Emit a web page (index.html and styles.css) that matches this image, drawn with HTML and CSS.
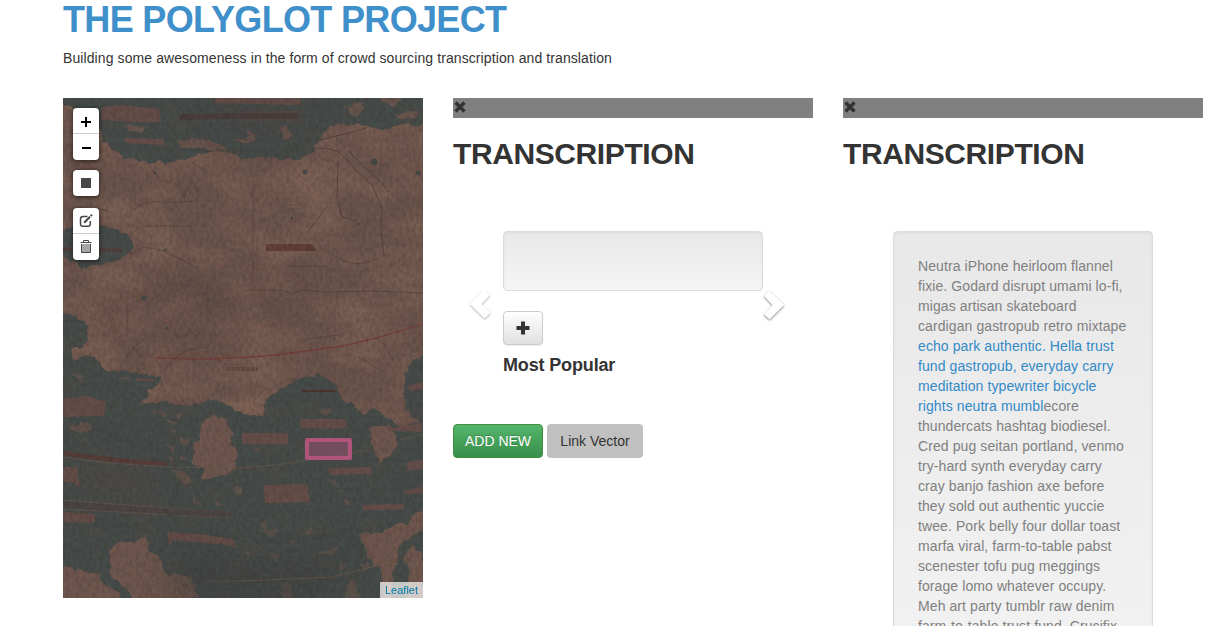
FILE: index.html
```html
<!DOCTYPE html>
<html lang="en">
<head>
<meta charset="utf-8">
<title>The Polyglot Project</title>
<link rel="stylesheet" href="styles.css">
</head>
<body>
<header class="page-header">
  <h1 class="site-title"><a href="#">THE POLYGLOT PROJECT</a></h1>
  <p class="tagline">Building some awesomeness in the form of crowd sourcing transcription and translation</p>
</header>
<main class="columns">
  <section class="map">
    <svg class="map-image" viewBox="0 0 360 500" width="360" height="500">
      <defs>
        <filter id="ragged" x="0" y="0" width="360" height="500" filterUnits="userSpaceOnUse" color-interpolation-filters="sRGB">
          <feTurbulence type="fractalNoise" baseFrequency=".12" numOctaves="3" seed="7"/>
          <feDisplacementMap in="SourceGraphic" scale="7" xChannelSelector="R" yChannelSelector="G"/>
          <feGaussianBlur stdDeviation=".7"/>
        </filter>
        <filter id="grain" x="0" y="0" width="360" height="500" filterUnits="userSpaceOnUse" color-interpolation-filters="sRGB">
          <feTurbulence type="fractalNoise" baseFrequency=".3 .2" numOctaves="4" seed="3"/>
          <feColorMatrix values="0 0 0 0 .18  0 0 0 0 .15  0 0 0 0 .13  1.4 0 0 0 -.5"/>
        </filter>
        <filter id="mottle" x="0" y="0" width="360" height="500" filterUnits="userSpaceOnUse" color-interpolation-filters="sRGB">
          <feTurbulence type="fractalNoise" baseFrequency=".018 .03" numOctaves="4" seed="12"/>
          <feColorMatrix values="0 0 0 0 .56  0 0 0 0 .43  0 0 0 0 .37  2.4 0 0 0 -.85"/>
        </filter>
        <filter id="stain" x="0" y="0" width="360" height="500" filterUnits="userSpaceOnUse" color-interpolation-filters="sRGB">
          <feTurbulence type="fractalNoise" baseFrequency=".03 .05" numOctaves="4" seed="31"/>
          <feColorMatrix values="0 0 0 0 .4  0 0 0 0 .31  0 0 0 0 .27  2.6 0 0 0 -1.15"/>
        </filter>
        <filter id="soft" x="0" y="0" width="360" height="500" filterUnits="userSpaceOnUse"><feGaussianBlur stdDeviation=".6"/></filter>
        <filter id="shade" x="0" y="0" width="360" height="500" filterUnits="userSpaceOnUse"><feGaussianBlur stdDeviation="14"/></filter>
      </defs>
      <rect width="360" height="500" fill="#6b544c"/>
      <rect width="360" height="500" filter="url(#mottle)" opacity=".5"/>
      <g filter="url(#ragged)" fill="#464c4a">
        <path d="M0-9H370V28L345 26 320 31 300 28 280 26 265 30 256 43 249 54 235 62 205 59 180 61 168 53 150 52 138 56 116 63 88 65 62 60 50 51 40 43 35 24 20 20 12 10 0 6z"/>
        <path d="M-5 133L25 128 53 130 70 142 72 150 61 160 42 165 20 170-5 153z"/>
        <path d="M-5 213L12 217 23 227 26 241 18 250 8 250 10 263 22 257 35 261 42 273 65 274 98 278 93 288 83 292 86 300 78 306 103 303 123 308 146 303 163 306 181 316 200 319 202 303 213 294 237 280 257 277 270 284 280 301 291 307 301 317 310 310 324 319 338 331 356 323 345 314 341 300 342 275 348 263 367 254V510H-9z"/>
      </g>
      <rect width="360" height="500" filter="url(#stain)" opacity=".15"/>
      <g filter="url(#ragged)" fill="#6f574e">
        <path opacity=".85" d="M282 8L298 5 302 11 288 19zM318 0H337L332 8 320 5zM331 17L356 11 350 20 337 21zM216 31L225 28 229 39 221 42zM170 40L182 42 188 37 184 32 193 36 193 43 178 46zM65 27L82 29 79 34 66 33zM113 42L145 41 165 51 118 50zM0 9L12 14 8 24 0 20zM18 28L29 35 25 45 15 40z"/>
        <path d="M137 326L149 317 163 321 170 338 167 347 176 354 171 366 174 373 157 378 138 381 143 369 130 367 130 347 137 341z"/>
        <path d="M0 468L19 474 37 476 40 486 55 493 58 505-8 505zM46 452L59 443 72 445 82 436 86 453 97 459 101 475 128 480 135 499 74 505 60 488 47 477z"/>
        <path d="M306 330L327 327 335 346 328 357 318 365 311 351zM297 436L319 434 332 426 345 426 352 414 370 408V428L350 436 336 450 333 470 328 475 330 503 321 500 319 475 307 461 302 451zM349 446L360 458V504H342L346 474 341 459z"/>
        <path opacity=".65" d="M4 329L26 323 29 332 13 336zM8 276L20 277 17 282zM50 279L69 280 67 283zM85 311L95 314 93 317zM96 312L104 316 101 320zM101 321L113 323 110 329zM111 315L121 317 116 322zM107 331L114 333 110 337zM116 339L127 342 121 347zM103 346L112 349 111 355zM117 357L124 360 119 363zM103 359L112 361 109 366zM107 370L119 373 129 383 122 387zM130 397L138 407 131 404zM152 400L159 407 152 407zM172 385L181 395 173 397zM257 312L263 309 268 312 264 318 258 316zM190 348L198 352 191 354z"/>
        <path opacity=".55" d="M193 431L214 432 210 440 203 436zM202 424L209 434 197 426zM240 434L252 429 244 439zM206 454L218 458 212 466zM226 441L233 442 231 447zM253 456L276 448 270 458zM275 465L284 466 280 473zM296 466L306 466 300 474zM218 484L229 485 230 503 220 500zM284 485L291 482 297 502 279 505zM270 381L279 389 266 384zM281 402L289 402 284 409zM275 393L279 391 277 396zM182 450L193 453 184 455z"/>
      </g>
      <g filter="url(#soft)" fill="#6c5048" opacity=".85">
        <path d="M39 9L60 7 96 11 98 24 72 24 38 22zM62 40L100 41 101 47 62 45zM154 0H238V7L150 5z"/>
        <path d="M0 301L25 298 43 304 41 318 0 319zM73 280L91 281 90 284 74 283zM0 369H14L17 389 8 384 0 384zM0 414L32 416 31 425 0 424zM105 434L138 436 170 441 175 450 164 447 110 442 105 449z"/>
        <path d="M237 321L283 321 284 328 277 331 238 330zM179 335H225V346H179zM265 370L308 369 309 376 267 377zM201 387L244 386 247 404 202 405zM299 407L341 406 340 412 300 412zM345 288L362 283V291L347 293zM344 364L365 361V371L344 372zM341 393L366 387V395L343 396zM324 331L359 325V334L326 333z"/>
      </g>
      <g filter="url(#shade)">
        <path d="M120 450Q220 480 290 450L250 500H100z" fill="#3d3e3b" opacity=".5"/>
        <path d="M20 340Q40 370 100 375L80 410 20 395z" fill="#514844" opacity=".5"/>
        <path d="M150 10H235V30H150z" fill="#4c433f" opacity=".5"/>
        <path d="M60 215L130 210 160 235 80 240zM110 180Q170 190 230 190L220 210 100 200z" fill="#4d403b" opacity=".4"/>
      </g>
      <g filter="url(#soft)" fill="none">
        <path d="M117 19L180 18 236 18" stroke="#4d3437" stroke-width="6" opacity=".55"/>
        <path d="M180 14H240M180 22H240" stroke="#69483f" opacity=".7"/>
        <path d="M203 146H249L254 153H203z" fill="#57362f" opacity=".75"/>
        <path d="M206 147V153M212 147V153M220 147V153M230 147V153M238 147V153" stroke="#725148" opacity=".6"/>
        <path d="M58 152H35M0 151H9" stroke="#58373b" stroke-width="3" stroke-dasharray="4 1"/>
        <path d="M239 293H273" stroke="#4d302f" stroke-width="2"/>
        <path d="M163 271H195" stroke="#583e36" stroke-width="4" stroke-dasharray="4 1" opacity=".6"/>
        <path d="M0 355Q50 363 104 366" stroke="#583c38" stroke-width="4"/>
        <path d="M0 359Q45 366 105 369M0 402L168 415M0 411L170 420" stroke="#6e5850" opacity=".7"/>
        <path d="M0 407L168 417" stroke="#4e4040" stroke-width="6" opacity=".6"/>
        <path d="M93 260Q178 263 235 254L280 248 313 240 360 226" stroke="#753f39" stroke-width="1.3"/>
        <path d="M256 42Q275 38 303 30M140 53H182M255 50Q276 48 289 68L309 87 319 110 318 132 321 157M275 62L274 102 279 119 294 123M285 53L318 84 326 94M265 107L244 135" stroke="#493b37" opacity=".65"/>
        <path d="M245 241L275 237M180 192L218 192 229 196 240 192 265 194 310 193 360 195M295 258L319 274M321 246L330 262M79 128H127M225 168H264" stroke="#483935" opacity=".5"/>
        <path d="M105 369L180 370 220 366 308 352M337 342L360 336M180 483L270 479 340 461M140 483H180" stroke="#705a4c" opacity=".65"/>
        <path d="M323 330L345 326 360 323M35 427L34 480" stroke="#5a4c46" opacity=".6"/>
        <path d="M90 72Q102 91 111 80M115 83L121 100 129 83 137 98M128 63L145 75M20 115Q30 108 45 113M68 156L80 149 98 152 117 161 135 170M100 273L108 263 122 253 144 249M120 225L134 239 140 230M60 265L70 250 85 238M70 112Q85 100 100 105L130 103M260 150Q290 175 315 160" stroke="#4e3f39" opacity=".55"/>
        <path d="M190 90V190M64 205V235" stroke="#4b3c37" stroke-width="3" opacity=".2"/>
        <g fill="#394345" opacity=".75"><circle cx="242" cy="74" r="2.5"/><circle cx="311" cy="64" r="3.5"/><circle cx="355" cy="75" r="2.5"/><circle cx="81" cy="200" r="2.5"/><circle cx="104" cy="230" r="1.5"/><circle cx="92" cy="75" r="1.5"/><circle cx="93" cy="70" r="1"/><circle cx="229" cy="120" r="1.3"/><circle cx="295" cy="126" r="1.2"/><circle cx="102" cy="152" r="1.5"/><circle cx="125" cy="187" r="1"/></g>
        <path d="M225 105H237M227 109H238M145 142H152M170 149H177M350 92V98M354 100V106M260 145H264M258 144V146" stroke="#93816e" stroke-dasharray="1 2" opacity=".7"/>
      </g>
      <rect width="360" height="500" filter="url(#grain)" opacity=".33"/>
      <rect x="244" y="342" width="43" height="18" fill="#b75683" fill-opacity=".4" stroke="#b95580" stroke-width="4" stroke-linejoin="round" stroke-opacity=".9"/>
    </svg>
    <div class="map-controls">
      <div class="control-bar">
        <a class="control"><svg width="26" height="26"><path d="M8 14H18M13 9V19" stroke="#000" stroke-width="2"/></svg></a>
        <a class="control"><svg width="26" height="26"><path d="M9 14H18" stroke="#000" stroke-width="2"/></svg></a>
      </div>
      <div class="control-bar"><a class="control"><svg width="26" height="26"><path d="M8 8H18V18H8z" fill="#464646"/></svg></a></div>
      <div class="control-bar edit-bar">
        <a class="control"><svg width="26" height="26" fill="none" stroke="#464646"><path d="M14.5 8.5H10Q7.5 8.5 7.5 11V16Q7.5 18.3 10 18.3H15Q17.3 18.3 17.3 16V13" stroke-width="1.5"/><path d="M11.2 14.7L17 8.8M17.7 8.1L19 6.8" stroke-width="2"/></svg></a>
        <a class="control"><svg width="26" height="26" fill="none" stroke="#464646"><path d="M7.5 8.5H18.5M10.5 8V6.5H15.5V8M8.5 10V18.5H17.5V10"/><path d="M9 10H17V18H9z" fill="#aaa" stroke="none"/><path d="M11 10V18M13 10V18M15 10V18" stroke="#a0a0a0"/></svg></a>
      </div>
    </div>
    <a class="attribution">Leaflet</a>
  </section>

  <section class="panel">
    <div class="panel-bar"><svg width="14" height="18"><path d="M2.5 4.5L11.5 13.5M11.5 4.5L2.5 13.5" stroke="#333" stroke-width="3.4"/></svg></div>
    <h2 class="panel-title">TRANSCRIPTION</h2>
    <div class="carousel">
      <svg class="arrow previous" width="28" height="38" viewBox="0 0 28 38"><path d="M4 19L18.5 4.5 24 10 15.5 19 24.5 28 18.5 33.5z"/></svg>
      <div class="well"></div>
      <button class="button add-button"><svg width="14" height="14"><path d="M.5 7H13.5M7 .5V13.5" stroke="#333" stroke-width="4"/></svg></button>
      <h4 class="caption">Most Popular</h4>
      <svg class="arrow next" width="28" height="38" viewBox="0 0 28 38"><path d="M9 4.5L24 19 9.5 33.5 4 28 12.5 19 4 10z"/></svg>
    </div>
    <div class="actions">
      <button class="button success">ADD NEW</button>
      <button class="button link-button">Link Vector</button>
    </div>
  </section>

  <section class="panel">
    <div class="panel-bar"><svg width="14" height="18"><path d="M2.5 4.5L11.5 13.5M11.5 4.5L2.5 13.5" stroke="#333" stroke-width="3.4"/></svg></div>
    <h2 class="panel-title">TRANSCRIPTION</h2>
    <div class="carousel">
      <div class="well text-well">Neutra iPhone heirloom flannel<br>fixie. Godard disrupt umami lo-fi,<br>migas artisan skateboard<br>cardigan gastropub retro mixtape<br><span class="highlight">echo park authentic. Hella trust<br>fund gastropub, everyday carry<br>meditation typewriter bicycle<br>rights neutra mumbl</span>ecore<br>thundercats hashtag biodiesel.<br>Cred pug seitan portland, venmo<br>try-hard synth everyday carry<br>cray banjo fashion axe before<br>they sold out authentic yuccie<br>twee. Pork belly four dollar toast<br>marfa viral, farm-to-table pabst<br>scenester tofu pug meggings<br>forage lomo whatever occupy.<br>Meh art party tumblr raw denim<br>farm-to-table trust fund. Crucifix</div>
    </div>
  </section>
</main>
</body>
</html>
```
FILE: styles.css
```css
* { box-sizing: border-box; }
html { overflow: hidden; }
body {
  margin: 0;
  height: 626px;
  overflow: hidden;
  background: #fff;
  color: #333;
  font: 14px/20px "Liberation Sans", Arial, sans-serif;
}
.page-header { height: 98px; padding-left: 63px; }
.site-title {
  margin: 0;
  height: 48px;
  font-size: 36px;
  line-height: 40px;
  letter-spacing: -.67px;
  white-space: nowrap;
}
.site-title a { color: #3f8fca; text-decoration: none; }
.tagline { margin: 0; letter-spacing: .095px; }
.columns { display: grid; grid-template-columns: repeat(3, 360px); gap: 30px; height: 528px; padding-left: 63px; overflow: hidden; }
.map { position: relative; height: 500px; overflow: hidden; }
.map-image { display: block; }
.map-controls { position: absolute; left: 10px; top: 10px; display: flex; flex-direction: column; gap: 10px; }
.control-bar { width: 26px; border-radius: 4px; background: #fff; box-shadow: 0 1px 5px rgba(0, 0, 0, .65); }
.edit-bar { margin-top: 2px; }
.control { display: block; height: 26px; }
.control:first-child:not(:last-child) { border-bottom: 1px solid #ccc; }
.control svg { display: block; }
.attribution {
  position: absolute;
  right: 0;
  bottom: 0;
  padding: 0 5px;
  background: rgba(255, 255, 255, .7);
  color: #0078a8;
  font-size: 11px;
  line-height: 16px;
}
.panel-bar { height: 20px; background: #808080; }
.panel-bar svg { display: block; }
.panel-title { margin: 16px 0 0; font-size: 30px; line-height: 40px; letter-spacing: -.4px; }
.carousel { position: relative; padding: 57px 50px 0; }
.well {
  height: 60px;
  border: 1px solid #dcdcdc;
  border-radius: 4px;
  background: linear-gradient(#e8e8e8, #f5f5f5);
  box-shadow: inset 0 1px 3px rgba(0, 0, 0, .05), 0 1px 0 rgba(255, 255, 255, .1);
}
.text-well { height: 560px; padding: 24px; color: #808080; letter-spacing: .09px; white-space: nowrap; }
.highlight { color: #3289c8; }
.arrow { position: absolute; top: 111px; fill: #fff; filter: drop-shadow(0 1px 1px rgba(0, 0, 0, .5)); }
.previous { left: 13px; opacity: .65; }
.next { left: 307px; top: 112px; }
.button {
  height: 34px;
  padding: 0 12px;
  border: 1px solid transparent;
  border-radius: 4px;
  color: #333;
  font: inherit;
}
.add-button {
  display: flex;
  align-items: center;
  justify-content: center;
  width: 40px;
  margin-top: 20px;
  border-color: #ccc;
  background: linear-gradient(#fff, #e0e0e0);
  box-shadow: 0 1px 1px rgba(0, 0, 0, .08);
}
.caption { margin: 10px 0 0; font-size: 18px; line-height: 20px; letter-spacing: -.15px; }
.actions { display: flex; gap: 4px; padding-top: 49px; }
.success {
  width: 90px;
  padding: 0;
  border-color: #3e8f3e;
  background: linear-gradient(#55b56b, #388f4b);
  color: #fff;
  text-shadow: 0 -1px 0 rgba(0, 0, 0, .2);
}
.link-button { width: 96px; padding: 0; background: #c0c0c0; }
```
